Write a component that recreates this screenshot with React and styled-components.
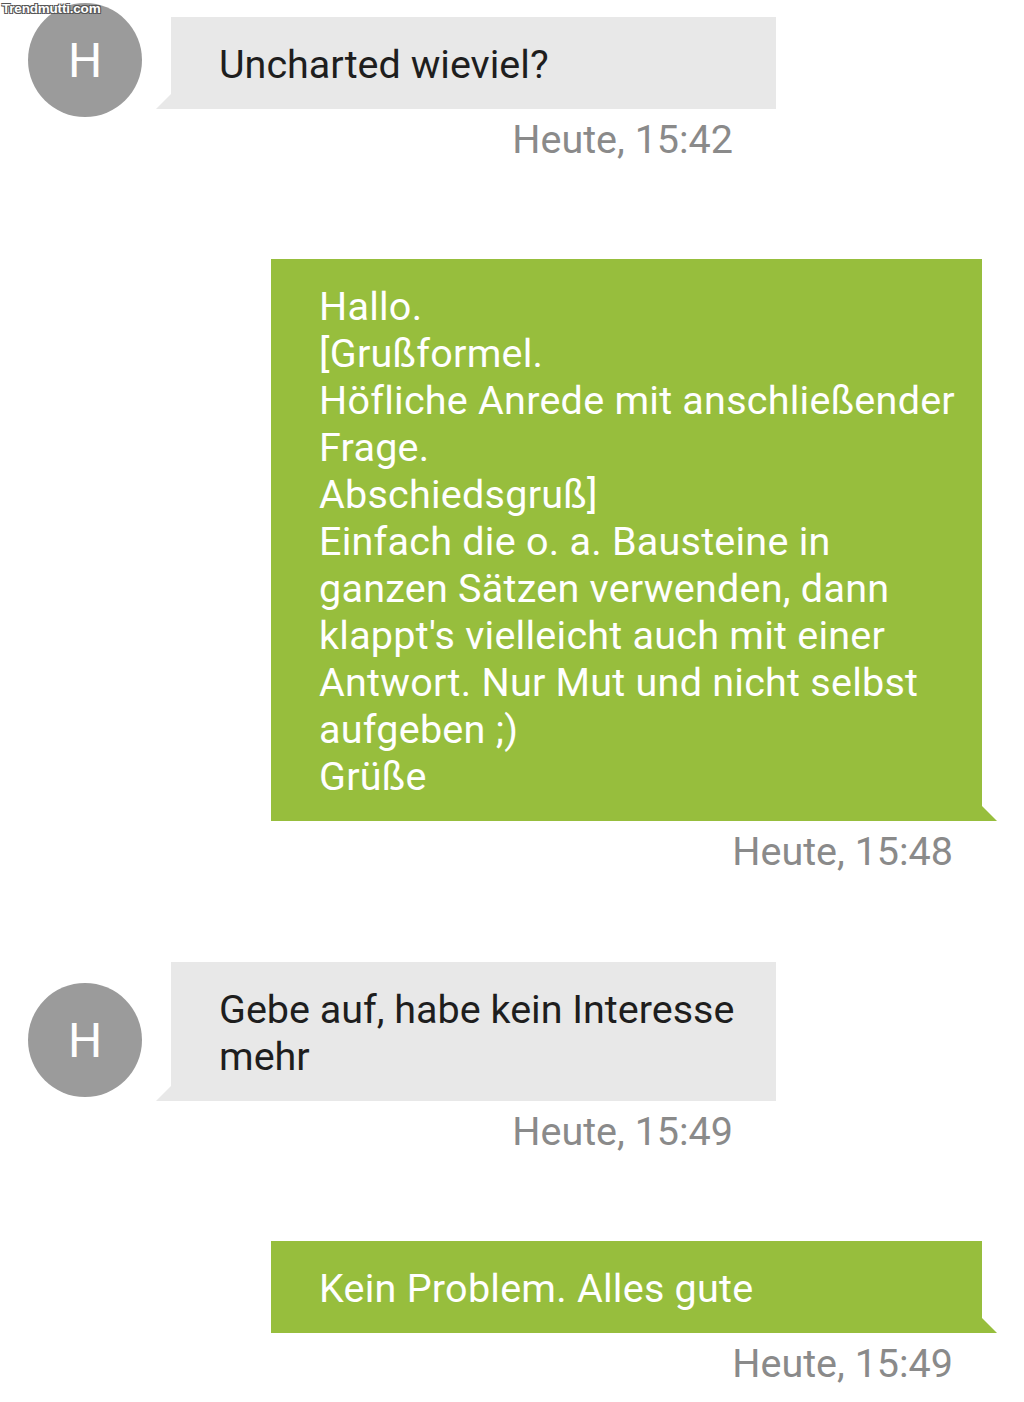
import React from "react";
import styled, { createGlobalStyle } from "styled-components";

const GlobalStyle = createGlobalStyle`
  html, body {
    margin: 0;
    padding: 0;
    background: #ffffff;
  }
  body {
    font-family: Roboto, "Noto Sans", "Liberation Sans", sans-serif;
    -webkit-font-smoothing: antialiased;
  }
`;

const Page = styled.div`
  position: relative;
  width: 1024px;
  min-height: 1402px;
  box-sizing: border-box;
  padding-top: 17px;
  overflow: hidden;
`;

const Watermark = styled.div`
  position: absolute;
  top: 1px;
  left: 2px;
  z-index: 2;
  font-family: "Liberation Sans", Arial, sans-serif;
  font-weight: bold;
  font-size: 13.5px;
  line-height: 15px;
  color: #ffffff;
  letter-spacing: -0.2px;
  text-shadow: -1px -1px 0 #555, 1px -1px 0 #555, -1px 1px 0 #555,
    1px 1px 0 #555;
`;

const Group = styled.div`
  display: flex;
  flex-direction: column;
  margin-top: ${(p) => p.$space || 0}px;
`;

const IncomingRow = styled.div`
  display: flex;
  align-items: flex-start;
  padding-left: 28px;
  gap: 29px;
`;

/* the avatar hangs beside the bubble without changing the row height */
const Avatar = styled.div`
  flex: none;
  width: 114px;
  height: 114px;
  border-radius: 50%;
  background: #9b9b9b;
  color: #ffffff;
  display: flex;
  align-items: center;
  justify-content: center;
  font-size: 48px;
  margin-top: ${(p) => p.$shift}px;
  margin-bottom: ${(p) => -(114 + p.$shift)}px;
`;

const Bubble = styled.div`
  position: relative;
  box-sizing: border-box;
  padding: 24px 20px 21px 48px;
  font-size: 39.5px;
  line-height: 47px;
`;

const GrayBubble = styled(Bubble)`
  width: 605px;
  background: #e8e8e8;
  color: #1e1e1e;

  &::before {
    content: "";
    position: absolute;
    left: -15px;
    bottom: 0;
    width: 15px;
    height: 15px;
    background: #e8e8e8;
    clip-path: polygon(0 100%, 100% 0, 100% 100%);
  }
`;

const GreenBubble = styled(Bubble)`
  width: 711px;
  margin-left: 271px;
  background: #97be3d;
  color: #ffffff;
  letter-spacing: 0.25px;

  &::after {
    content: "";
    position: absolute;
    right: -15px;
    bottom: 0;
    width: 15px;
    height: 15px;
    background: #97be3d;
    clip-path: polygon(0 0, 100% 100%, 0 100%);
  }
`;

const Line = styled.div`
  white-space: nowrap;
`;

const Stamp = styled.div`
  margin-top: 7px;
  font-size: 39.5px;
  line-height: 47px;
  color: #8a8a8a;
  text-align: right;
  padding-right: ${(p) => p.$right}px;
`;

const thread = [
  {
    from: "them",
    shift: -14,
    space: 0,
    lines: ["Uncharted wieviel?"],
    time: "Heute, 15:42",
  },
  {
    from: "me",
    space: 96,
    lines: [
      "Hallo.",
      "[Grußformel.",
      "Höfliche Anrede mit anschließender",
      "Frage.",
      "Abschiedsgruß]",
      "Einfach die o. a. Bausteine in",
      "ganzen Sätzen verwenden, dann",
      "klappt's vielleicht auch mit einer",
      "Antwort. Nur Mut und nicht selbst",
      "aufgeben ;)",
      "Grüße",
    ],
    time: "Heute, 15:48",
  },
  {
    from: "them",
    shift: 21,
    space: 87,
    lines: ["Gebe auf, habe kein Interesse", "mehr"],
    time: "Heute, 15:49",
  },
  {
    from: "me",
    space: 86,
    lines: ["Kein Problem. Alles gute"],
    time: "Heute, 15:49",
  },
];

const Message = ({ msg }) => {
  const text = msg.lines.map((l, i) => <Line key={i}>{l}</Line>);
  if (msg.from === "them") {
    return (
      <Group $space={msg.space}>
        <IncomingRow>
          <Avatar $shift={msg.shift}>H</Avatar>
          <GrayBubble>{text}</GrayBubble>
        </IncomingRow>
        <Stamp $right={291}>{msg.time}</Stamp>
      </Group>
    );
  }
  return (
    <Group $space={msg.space}>
      <GreenBubble>{text}</GreenBubble>
      <Stamp $right={71}>{msg.time}</Stamp>
    </Group>
  );
};

export default function App() {
  return (
    <>
      <GlobalStyle />
      <Page>
        <Watermark>Trendmutti.com</Watermark>
        {thread.map((m, i) => (
          <Message key={i} msg={m} />
        ))}
      </Page>
    </>
  );
}
